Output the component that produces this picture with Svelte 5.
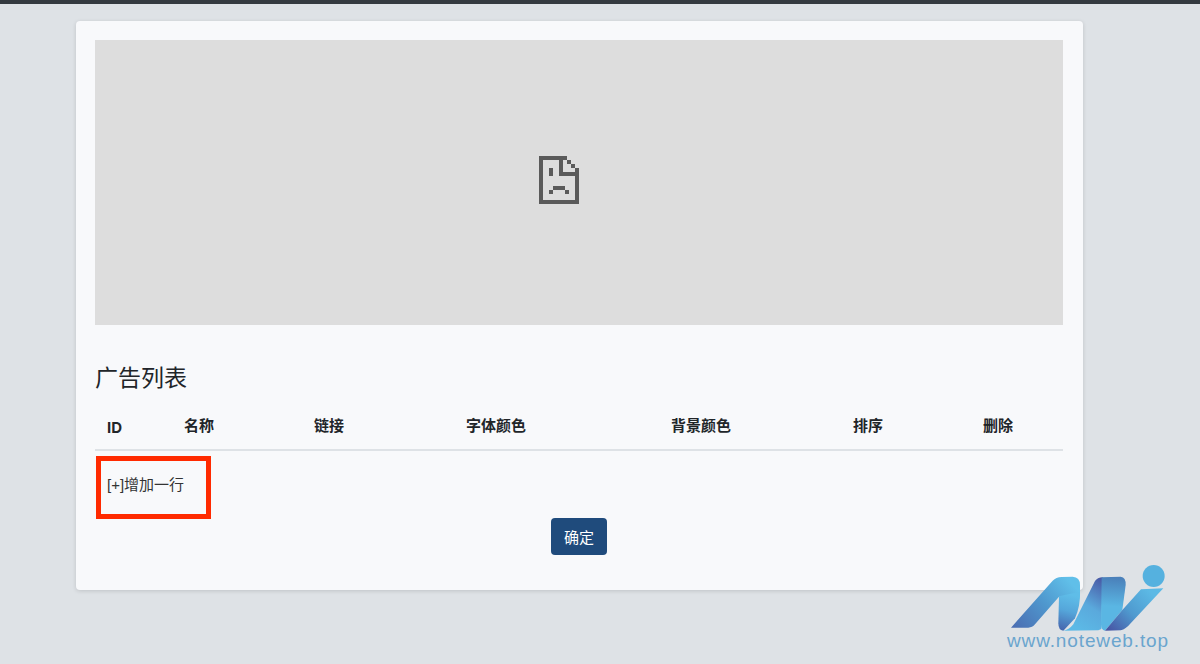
<script>
  const columns = [
    { label: 'ID', width: 77 },
    { label: '名称', width: 130 },
    { label: '链接', width: 152 },
    { label: '字体颜色', width: 205 },
    { label: '背景颜色', width: 182 },
    { label: '排序', width: 130 },
    { label: '删除', width: 92 }
  ];
</script>

<div class="page">
  <div class="topbar"></div>
  <main class="card">
    <div class="placeholder">
      <svg class="broken" width="40" height="48" viewBox="0 0 40 48" shape-rendering="crispEdges" aria-hidden="true">
        <g fill="#5a5a5a">
          <rect x="0" y="0" width="28" height="4" />
          <rect x="0" y="0" width="4" height="48" />
          <rect x="0" y="44" width="40" height="4" />
          <rect x="36" y="12" width="4" height="36" />
          <rect x="20" y="0" width="4" height="20" />
          <rect x="20" y="16" width="20" height="4" />
          <rect x="28" y="4" width="4" height="4" />
          <rect x="32" y="8" width="4" height="4" />
          <rect x="10" y="12" width="4" height="8" />
          <rect x="14" y="30" width="12" height="4" />
          <rect x="10" y="34" width="4" height="4" />
          <rect x="26" y="34" width="4" height="4" />
        </g>
      </svg>
    </div>

    <h2 class="title">广告列表</h2>

    <div class="thead">
      {#each columns as col}
        <div class="th" style="width: {col.width}px">{col.label}</div>
      {/each}
    </div>

    <div class="addrow">
      <span class="add">[+]增加一行</span>
      <span class="highlight"></span>
    </div>

    <div class="actions">
      <button class="confirm" type="button">确定</button>
    </div>
  </main>

  <div class="logo">
    <svg width="210" height="109" viewBox="0 0 630 327" aria-hidden="true">
      <defs>
        <linearGradient id="g1" x1="75" y1="225" x2="235" y2="75" gradientUnits="userSpaceOnUse">
          <stop offset="0" stop-color="#4a6db2" />
          <stop offset="0.55" stop-color="#4f98ce" />
          <stop offset="1" stop-color="#60bfe9" />
        </linearGradient>
        <linearGradient id="g5" x1="245" y1="120" x2="215" y2="225" gradientUnits="userSpaceOnUse">
          <stop offset="0" stop-color="#5fbde8" />
          <stop offset="0.45" stop-color="#55a6da" />
          <stop offset="1" stop-color="#4666ae" />
        </linearGradient>
        <linearGradient id="g2" x1="255" y1="215" x2="345" y2="75" gradientUnits="userSpaceOnUse">
          <stop offset="0" stop-color="#5cb9e6" />
          <stop offset="0.45" stop-color="#5aa9dc" />
          <stop offset="1" stop-color="#4857a4" />
        </linearGradient>
        <linearGradient id="g4" x1="375" y1="68" x2="365" y2="200" gradientUnits="userSpaceOnUse">
          <stop offset="0" stop-color="#4a80ba" />
          <stop offset="0.65" stop-color="#5ab6e3" />
          <stop offset="1" stop-color="#5ab6e3" />
        </linearGradient>
        <linearGradient id="g3" x1="360" y1="230" x2="480" y2="110" gradientUnits="userSpaceOnUse">
          <stop offset="0" stop-color="#4755a4" />
          <stop offset="0.5" stop-color="#4f9acf" />
          <stop offset="1" stop-color="#5cb9e5" />
        </linearGradient>
      </defs>
      <path d="M63 218 L188 77 Q198 67 215 66 L248 65 Q270 66 270 90 L270 125 L207 125 L135 208 Q127 218 115 218 Z" fill="url(#g1)" />
      <path d="M207 124 L270 110 Q272 150 255 190 L220 227 Q205 226 205 205 Z" fill="url(#g5)" />
      <path d="M220 227 Q236 226 250 208 L315 78 Q322 68 338 67 L334 222 L325 226 Z" fill="url(#g2)" />
      <path d="M335 67 L392 65 Q408 66 407 90 L397 165 L345 227 Q333 225 333 208 Z" fill="url(#g4)" />
      <path d="M345 227 L392 226 Q408 222 420 207 L520 100 L453 103 L397 165 Z" fill="url(#g3)" />
      <circle cx="491" cy="63" r="33" fill="#55b1df" />
    </svg>
    <span class="logotext">www.noteweb.top</span>
  </div>
</div>

<style>
  :global(body) {
    margin: 0;
    background: #dee2e6;
  }

  .page {
    position: relative;
    height: 664px;
    overflow: hidden;
    background: #dee2e6;
    font-family: "Liberation Sans", "Noto Sans CJK SC", sans-serif;
    color: #212529;
  }

  .topbar {
    height: 4px;
    background: #343a40;
  }

  .card {
    box-sizing: border-box;
    width: 1007px;
    height: 569px;
    margin: 17px 0 0 76px;
    padding: 19px 20px 0 19px;
    background: #f8f9fb;
    border-radius: 4px;
    box-shadow: 0 1px 4px rgba(0, 0, 0, 0.14);
  }

  .placeholder {
    display: flex;
    align-items: center;
    justify-content: center;
    box-sizing: border-box;
    height: 285px;
    padding: 0 40px 5px 0;
    background: #dddddd;
  }

  .title {
    margin: 39px 0 0;
    font-size: 23px;
    line-height: 28px;
    font-weight: 400;
    color: #212529;
  }

  .thead {
    display: flex;
    margin-top: 11px;
    height: 46px;
    border-bottom: 2px solid #dee2e6;
  }

  .th {
    box-sizing: border-box;
    padding: 12px 0 0 12px;
    font-size: 15px;
    line-height: 22px;
    font-weight: 700;
    color: #212529;
  }

  .th:first-child {
    font-family: Inter, "Liberation Sans", sans-serif;
    padding-top: 14px;
  }

  .addrow {
    position: relative;
    height: 67px;
    padding-left: 12px;
    font-size: 15px;
    line-height: 21px;
    color: #333333;
  }

  .add {
    display: block;
    padding-top: 23px;
  }

  .highlight {
    position: absolute;
    box-sizing: border-box;
    left: 1px;
    top: 5px;
    width: 115px;
    height: 63px;
    border: 5.5px solid #ff2a00;
  }

  .actions {
    display: flex;
    justify-content: center;
  }

  .confirm {
    width: 56px;
    height: 37px;
    padding: 0;
    border: 0;
    border-radius: 4px;
    background: #1f4b7c;
    color: #ffffff;
    font: inherit;
    font-size: 15px;
  }

  .logo {
    position: absolute;
    left: 990px;
    top: 555px;
    width: 210px;
    height: 109px;
  }

  .logo svg {
    display: block;
  }

  .logotext {
    position: absolute;
    left: 17px;
    top: 76px;
    font-size: 19px;
    line-height: 20px;
    letter-spacing: 0.87px;
    color: #6aa5ce;
    white-space: nowrap;
  }
</style>
